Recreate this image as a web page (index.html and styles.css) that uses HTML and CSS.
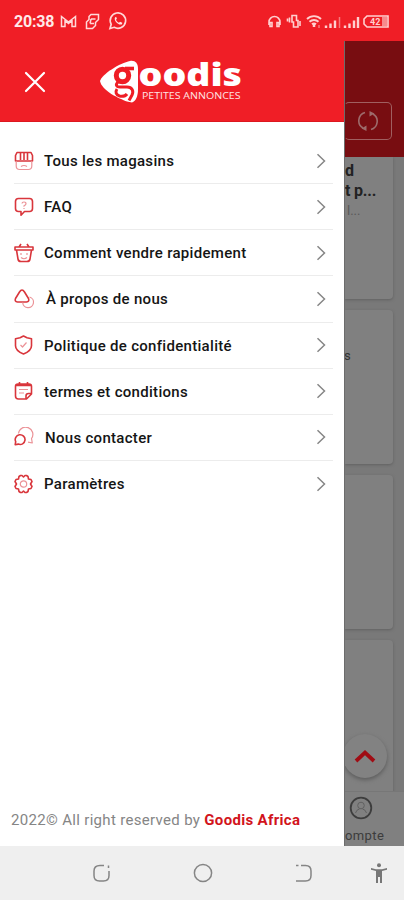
FILE: index.html
```
<!DOCTYPE html>
<html lang="fr">
<head>
<meta charset="utf-8">
<title>Goodis</title>
<link rel="stylesheet" href="styles.css">
</head>
<body>
<div class="phone">
  <header class="status">
    <span class="clock">20:38</span>
    <svg class="st-left" width="68" height="20" viewBox="0 0 68 20" fill="none" stroke="#ffd9d9" stroke-width="1.5">
      <path d="M1.5 15.500V5.500L8.500 11l7-5.500v10h-3.500V9.500L8.500 12.500 5 9.500v6z"/>
      <path d="M31 3.500h7.500v5l-3 3v3l-3 3h-6V11l2.500-2.500V5.500zM31 8h4.500M30 12.500h4M31 8l-1 4.500"/>
      <path d="M50 17.500l1.200-4.200a7.700 7.700 0 1 1 3 3z" stroke-width="1.700"/>
      <path d="M55 6.500c-1.500 3 3.500 8.500 7 6.800l.3-1.600-2.300-1-1 1c-1.500-.6-2.400-1.600-3-3l.9-1-.8-1.900z" fill="#ffe4e4" stroke="none"/>
    </svg>
    <svg class="st-right" width="126" height="20" viewBox="0 0 126 20" fill="none" stroke="#ffd0d0" stroke-width="1.600">
      <path d="M3 14v-3a5.500 5.500 0 0 1 11 0v3M4 11.500v4h2v-4zM13 11.500v4h-2v-4z"/>
      <path d="M26 4.500h4.500v5h1.500v6.500h-4.500V11H26zM23.500 6.500v5M21.500 7.500v3M34 10v5"/>
      <path d="M41 8a10 10 0 0 1 14 0M43.500 10.800a6.500 6.500 0 0 1 9 0M46 13.300a3 3 0 0 1 4 0" stroke-width="1.900"/>
      <path d="M48 13v3" stroke-width="2.500"/>
      <path d="M60 14.500V17M64.500 12.500v4.500M69 9.500V17M79 14.500V17M83.500 12.500v4.500M88 9.500V17M92 6v11" stroke-width="2.400"/>
      <path d="M53 14v3M73.500 6v11" stroke="#f77a7d" stroke-width="1.500"/>
      <path d="M101 5h21v11h-21l-3-3V8z"/>
      <path d="M116 6h5v9h-5z" fill="#f78a8d" stroke="none"/>
      <text x="104" y="14" class="battery">42</text>
    </svg>
  </header>

  <main class="stage">
    <aside class="drawer">
      <div class="brand">
        <svg class="close" width="22" height="22" viewBox="0 0 22 22"><path d="M2 2l18 18M20 2L2 20" stroke="#fff" stroke-width="2.200" stroke-linecap="round"/></svg>
        <svg class="logo" width="146" height="46" viewBox="0 0 146 46">
          <path d="M0 23C2 16 20 5 30 3c5-.8 8 2 8 8v20c0 7-2 12-6 13.500l-5-1C19 40.500 2 33 0 23z" fill="#fff"/>
          <g fill="none" stroke="#ef1d25">
            <circle cx="22.500" cy="17.500" r="6.200" stroke-width="5"/>
            <path d="M25 10.500h9" stroke-width="3.600"/>
            <path d="M18 24c-3 3-1.500 5 2 5h7c5 0 7 4 5 8l-3 5.500M17 31c-2 3-1 6 2.500 7 3 .6 6 0 7.500-2" stroke-width="3"/>
          </g>
          <text class="word" x="38.500" y="27.500" textLength="103.500" lengthAdjust="spacingAndGlyphs">oodis</text>
          <text class="tag" x="42" y="41" textLength="98.500" lengthAdjust="spacingAndGlyphs">PETITES ANNONCES</text>
        </svg>
      </div>
      <nav class="menu">
        <a class="item"><svg class="ic" viewBox="0 0 20 20"><path d="M3 1.500h14l1.500 3v5.500h-17V4.500zM6.500 1.500V9M10 1.500V9M13.500 1.500V9"/><path class="soft" d="M2.200 10v5q0 3.500 3.500 3.500h8.600q3.500 0 3.500-3.500v-5M7 15.500q3-2 6 0"/></svg><span>Tous les magasins</span><svg class="chev" viewBox="0 0 10 16"><path d="M1.500 1.200L8.500 8l-7 6.800"/></svg></a>
        <a class="item"><svg class="ic" viewBox="0 0 20 20"><path d="M4.500 1.500h11q3 0 3 3v7q0 3-3 3h-5L7 18.200v-3.700H4.500q-3 0-3-3v-7q0-3 3-3z"/><path class="soft" d="M8 6.500q0-1.500 2-1.500t2 1.700q0 1.300-2 2v1M10 11v1"/></svg><span>FAQ</span><svg class="chev" viewBox="0 0 10 16"><path d="M1.500 1.200L8.500 8l-7 6.800"/></svg></a>
        <a class="item"><svg class="ic" viewBox="0 0 20 20"><path d="M1 4h18v3H1zM5 4l2-3M15 4l-2-3M2.500 7l1.500 9q.4 2.500 3 2.500h6q2.600 0 3-2.500l1.500-9"/><path class="soft" d="M7 10v2M13 10v2M7 14.500q3 2.500 6 0"/></svg><span>Comment vendre rapidement</span><svg class="chev" viewBox="0 0 10 16"><path d="M1.500 1.200L8.500 8l-7 6.800"/></svg></a>
        <a class="item about"><svg class="ic" viewBox="0 0 20 20"><path d="M5.500 3Q8 -1 10.500 3l4 6.500q1.200 3-2 3.500H3.500q-3.200-.5-2-3.500z"/><path class="soft" d="M15.500 8a5.400 5.400 0 1 1-6.800 5.500"/></svg><span>À propos de nous</span><svg class="chev" viewBox="0 0 10 16"><path d="M1.500 1.200L8.500 8l-7 6.800"/></svg></a>
        <a class="item"><svg class="ic" viewBox="0 0 20 20"><path d="M9.500 1l3.500 1.800 4.500.9v7q0 5-8 8.300-8-3.300-8-8.300v-7l4.500-.9z"/><path class="soft" d="M6.500 10l2 2 4-4.500"/></svg><span>Politique de confidentialité</span><svg class="chev" viewBox="0 0 10 16"><path d="M1.500 1.200L8.500 8l-7 6.800"/></svg></a>
        <a class="item"><svg class="ic" viewBox="0 0 20 20"><path d="M4 3h11q2.500 0 2.500 2.500V13l-5 5h-8q-3 0-3-3V5.500Q1.500 3 4 3zM5.500 1v3.500M13.500 1v3.500M17.500 12.500h-3q-2.500 0-2.500 2.500v3M1.500 4.500h16"/><path class="soft" d="M5 8.500h9M5 12h5"/></svg><span>termes et conditions</span><svg class="chev" viewBox="0 0 10 16"><path d="M1.500 1.200L8.500 8l-7 6.800"/></svg></a>
        <a class="item contact"><svg class="ic" viewBox="0 0 20 20"><path d="M1.200 17.700l.5-3a4.900 4.900 0 1 1 2.500 2.400z"/><path class="soft" d="M4.500 6.500a7.200 7.200 0 1 1 13 5l.8 4.500-4.300-.8"/></svg><span>Nous contacter</span><svg class="chev" viewBox="0 0 10 16"><path d="M1.500 1.200L8.500 8l-7 6.800"/></svg></a>
        <a class="item"><svg class="ic" viewBox="0 0 20 20"><path d="M6.500 1.500H8L9.500 3 11 1.500h1.500l1.500 1 .5 2.500 2.500.5 1 2-1.500 2.500 1.500 2.500-1 2-2.500.5-.5 2.500-1.500 1H11L9.500 17 8 18.500H6.500l-1.500-1-.5-2.500-2.500-.5-1-2L2.500 10 1 7.500l1-2L4.500 5 5 2.500z"/><circle class="soft" cx="9.500" cy="10" r="3.200"/></svg><span>Paramètres</span><svg class="chev" viewBox="0 0 10 16"><path d="M1.500 1.200L8.500 8l-7 6.800"/></svg></a>
      </nav>
      <footer class="legal"><span>2022© All right reserved by</span> <b>Goodis Africa</b></footer>
    </aside>

    <section class="behind">
      <div class="appbar">
        <div class="refresh"><svg width="20" height="22" viewBox="0 0 20 22" fill="none" stroke="#9d6b6b" stroke-width="1.600"><path d="M7 2.500a8.500 8.500 0 0 0-2 15.500M13 19.500A8.500 8.500 0 0 0 15 4"/><path d="M11.500 1v5.500l5-3zM8.500 21v-5.500l-5 3z" fill="#9d6b6b" stroke="none"/></svg></div>
      </div>
      <div class="feed">
        <div class="card first"><p class="name">d</p><p class="name">t p...</p><p class="sub">l...</p></div>
        <div class="card"><p class="letter">s</p></div>
        <div class="card"></div>
        <div class="card last"></div>
      </div>
      <div class="tab">
        <svg width="24" height="24" viewBox="0 0 24 24" fill="none" stroke="#3d3d3d"><circle cx="12" cy="12" r="10.300" stroke-width="1.800"/><circle cx="12" cy="9.500" r="3.300" stroke="#606060"/><path d="M6.500 17q1-3.500 4-4M17.500 17q-1-3.500-4-4" stroke="#606060"/></svg>
        <span>ompte</span>
      </div>
      <div class="to-top"><svg width="22" height="14" viewBox="0 0 22 14"><path d="M2 12l9-8.500 9 8.500" fill="none" stroke="#a00c14" stroke-width="3.800"/></svg></div>
    </section>
  </main>

  <footer class="navbar">
    <svg width="20" height="20" viewBox="0 0 20 20"><path d="M12 2.500H8Q2 2.500 2 8v4.500q0 5.500 5.500 5.500h4q5.500 0 5.500-5.500V8M16.500 2.500v2.500"/></svg>
    <svg width="20" height="20" viewBox="0 0 20 20"><circle cx="10" cy="10" r="8.600"/></svg>
    <svg width="20" height="20" viewBox="0 0 20 20"><path d="M2 2.500h2.500M7 2.500h4.500q5.500 0 5.500 5.500v4.500q0 5.500-5.500 5.500H2"/></svg>
    <svg class="access" width="18" height="21" viewBox="0 0 18 21"><circle cx="9" cy="2.200" r="2"/><path d="M1 5l5 1.200h6L17 5v1.800l-5 1.200v12h-2v-6H8v6H6V8L1 6.800z"/></svg>
  </footer>
</div>
</body>
</html>
```
FILE: styles.css
```
* { box-sizing: border-box; }
body { margin: 0; font-family: Roboto, "Liberation Sans", sans-serif; }
p { margin: 0; }
.phone { width: 404px; height: 900px; display: flex; flex-direction: column; overflow: hidden; background: #fff; }

.status { height: 41px; flex: none; background: #f01e26; display: flex; align-items: center; padding: 1px 12px 0 14px; }
.clock { color: #ffe9e9; font-size: 16px; font-weight: 700; letter-spacing: -.2px; width: 46px; }
.st-left { flex: none; }
.st-right { margin-left: auto; flex: none; }
.battery { font-size: 9px; font-weight: 700; fill: #ffd0d0; stroke: none; }

.stage { height: 805px; flex: none; display: flex; }
.drawer { width: 344px; flex: none; display: flex; flex-direction: column; background: #fff; }
.brand { height: 81px; flex: none; background: #f01e26; border-bottom: 1px solid #dc1820; display: flex; align-items: center; padding-left: 24px; }
.close { margin-top: 2px; }
.logo { margin-left: 54px; flex: none; overflow: visible; }
.word { font-family: "Open Sans", sans-serif; font-weight: 800; font-size: 32px; fill: #fff; }
.tag { font-family: "Open Sans", sans-serif; font-size: 9.500px; fill: #ffe4e4; }

.menu { padding: 16px 11px 0 14px; }
.item { height: 46.150px; display: flex; align-items: center; border-bottom: 1.500px solid #ececec; }
.item:last-child { border-bottom-color: transparent; }
.item span { margin-left: 10.500px; padding-top: 1px; font-size: 15px; font-weight: 500; letter-spacing: .300px; color: #151515; white-space: nowrap; }
.item.about span { margin-left: 12.500px; }
.item.contact span { margin-left: 11.500px; }
.ic { width: 20px; height: 20px; flex: none; margin-left: -.500px; fill: none; stroke: #d9363c; stroke-width: 1.600; stroke-linejoin: round; }
.ic .soft { stroke: #eb9297; stroke-width: 1.200; }
.chev { width: 10px; height: 16px; margin-left: auto; margin-right: 7px; flex: none; fill: none; stroke: #868686; stroke-width: 1.500; }
.legal { margin-top: auto; padding: 0 0 16px 11px; font-size: 15px; line-height: 20px; letter-spacing: .320px; color: #858585; white-space: nowrap; }
.legal b { color: #d2141c; font-weight: 700; }

.behind { position: relative; width: 60px; overflow: hidden; display: flex; flex-direction: column; background: #797979; border-left: 1px solid #6c6c6c; }
.appbar { height: 116px; flex: none; padding-top: 61px; margin-left: -1px; background: #780d11; }
.refresh { width: 48px; height: 38px; border: 1.500px solid #a05f60; border-left-color: #780d11; border-radius: 5px; display: flex; align-items: center; justify-content: center; }
.feed { flex: 1; min-height: 0; overflow: hidden; display: flex; flex-direction: column; gap: 11px; }
.card { width: 48px; height: 154px; flex: none; background: #808080; border-radius: 0 4px 4px 0; box-shadow: 0 1px 3px #606060; }
.card.first { height: 142px; padding-top: 4px; border-top-right-radius: 0; }
.name { font-size: 16px; line-height: 20px; font-weight: 700; letter-spacing: -.200px; color: #222; white-space: nowrap; }
.sub { font-size: 13px; line-height: 20px; color: #5a5a5a; padding-left: 2px; }
.letter { padding-top: 38px; font-size: 13px; color: #333; margin-left: -1px; }
.tab { height: 55px; flex: none; background: #808080; border-top: 1px solid #777; padding: 4px 0 0 4px; display: flex; flex-direction: column; gap: 8px; }
.tab span { margin-left: -4px; font-size: 13px; line-height: 16px; color: #3c3c3c; letter-spacing: .4px; }
.to-top { position: absolute; left: -2px; top: 693px; width: 44px; height: 44px; border-radius: 50%; background: #828282; box-shadow: 0 2px 4px #5c5c5c; display: flex; align-items: center; justify-content: center; }

.navbar { flex: 1; background: #efefef; display: flex; align-items: center; padding: 0 16px 0 92px; }
.navbar svg { flex: none; margin-right: 81px; fill: none; stroke: #858585; stroke-width: 1.500; }
.navbar svg.access { margin: 0 0 0 auto; fill: #777; stroke: none; }
.navbar svg:nth-child(3) { margin-right: 0; }
```
